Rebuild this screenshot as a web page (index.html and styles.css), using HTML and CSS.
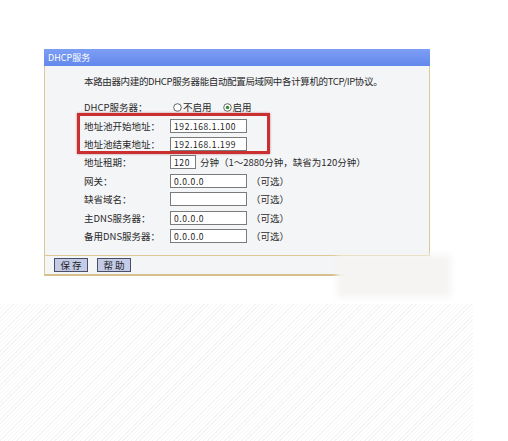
FILE: index.html
```html
<!DOCTYPE html>
<html>
  <head>
    <meta charset="utf-8" />
    <title>DHCP服务</title>
    <link rel="stylesheet" href="styles.css">
  </head>
  <body>
    <div class="panel">
      <div class="panel-title">DHCP服务</div>

      <div class="panel-body">
        <p class="desc">本路由器内建的DHCP服务器能自动配置局域网中各计算机的TCP/IP协议。</p>

        <div class="row">
          <span class="label">DHCP服务器：</span>
          <span class="radio">
            <svg width="9" height="9" viewBox="0 0 9 9"><circle cx="4.5" cy="4.5" r="3.8" fill="#fff" stroke="#555" stroke-width="0.9"/></svg>
            不启用
          </span>
          <span class="radio">
            <svg width="9" height="9" viewBox="0 0 9 9"><circle cx="4.5" cy="4.5" r="3.8" fill="#fff" stroke="#555" stroke-width="0.9"/><circle cx="4.5" cy="4.5" r="1.8" fill="#3a8a3a"/></svg>
            启用
          </span>
        </div>

        <!-- address pool, marked in red -->
        <div class="highlight">
          <div class="row">
            <span class="label">地址池开始地址：</span>
            <span class="field">192.168.1.100</span>
          </div>
          <div class="row">
            <span class="label">地址池结束地址：</span>
            <span class="field">192.168.1.199</span>
          </div>
        </div>

        <div class="row">
          <span class="label">地址租期：</span>
          <span class="field short">120</span>
          <span class="note">分钟（1～2880分钟，缺省为120分钟）</span>
        </div>
        <div class="row">
          <span class="label">网关：</span>
          <span class="field">0.0.0.0</span>
          <span class="note">（可选）</span>
        </div>
        <div class="row">
          <span class="label">缺省域名：</span>
          <span class="field"></span>
          <span class="note">（可选）</span>
        </div>
        <div class="row">
          <span class="label">主DNS服务器：</span>
          <span class="field">0.0.0.0</span>
          <span class="note">（可选）</span>
        </div>
        <div class="row">
          <span class="label">备用DNS服务器：</span>
          <span class="field">0.0.0.0</span>
          <span class="note">（可选）</span>
        </div>
      </div>

      <div class="panel-foot">
        <button>保 存</button>
        <button>帮 助</button>
      </div>

      <!-- faded watermark over the corner -->
      <div class="smudge"></div>
    </div>

    <div class="hatch"></div>
  </body>
</html>
```

FILE: styles.css
```css
body {
  margin: 0;
  background-color: #fff;
  font-family: "Noto Sans CJK SC", "DejaVu Sans", sans-serif;
  font-size: 9.5px;
  color: #2a2a2a;
}

.panel {
  position: relative;
  width: 386px;
  margin: 49px 0 0 44px;
}

.panel-title {
  height: 17px;
  line-height: 17px;
  padding-left: 4px;
  color: #fff;
  font-size: 9px;
  background: linear-gradient(#7d9ef4, #6288ec);
}

.panel-body {
  background-color: #f4f5f7;
  border-left: 1px solid #dcc896;
  border-right: 1px solid #dcc896;
  border-bottom: 1px solid #dcc896;
  padding: 6px 0 10px 39px;
}

.desc {
  margin: 0 0 8px 0;
  line-height: 18px;
  letter-spacing: -0.35px;
}

.row {
  display: flex;
  align-items: center;
  height: 18.4px;
}

.label {
  width: 86px;
  flex-shrink: 0;
}

.radio {
  display: inline-flex;
  align-items: center;
  gap: 1px;
  margin: 0 8px 0 3px;
}

.field {
  box-sizing: border-box;
  width: 77px;
  height: 14px;
  line-height: 12px;
  padding-left: 3px;
  background-color: #fff;
  border: 1px solid #7b7b7b;
  font-size: 8.5px;
  letter-spacing: 0.6px;
  color: #222;
}

.field.short {
  width: 26px;
}

.note {
  margin-left: 4px;
}

.highlight {
  position: relative;
}

.highlight::after {
  content: "";
  position: absolute;
  left: -7px;
  top: -3px;
  width: 187px;
  height: 35px;
  border: 3px solid #c9302f;
  box-shadow: 0 0 2px rgba(150, 20, 20, 0.5);
}

.panel-foot {
  display: flex;
  gap: 9px;
  height: 18px;
  align-items: center;
  padding-left: 9px;
  background-color: #f4f5f7;
  border-left: 1px solid #dcc896;
  border-bottom: 2px solid #d4c08c;
}

button {
  width: 34px;
  height: 14px;
  padding: 0;
  font-family: "Noto Sans CJK SC", sans-serif;
  font-size: 9.5px;
  line-height: 12px;
  color: #222;
  background-color: #c3cbe6;
  border: 1px solid #4a4f66;
  border-radius: 0;
}

.smudge {
  position: absolute;
  left: 293px;
  top: 206px;
  width: 114px;
  height: 42px;
  background-color: #f5f4f2;
  filter: blur(3px);
}

.hatch {
  width: 473px;
  height: 138px;
  margin-top: 28px;
  background: repeating-linear-gradient(
    -45deg,
    #fff 0,
    #fff 2px,
    #f5f5f5 2px,
    #f5f5f5 3px
  );
}
```
